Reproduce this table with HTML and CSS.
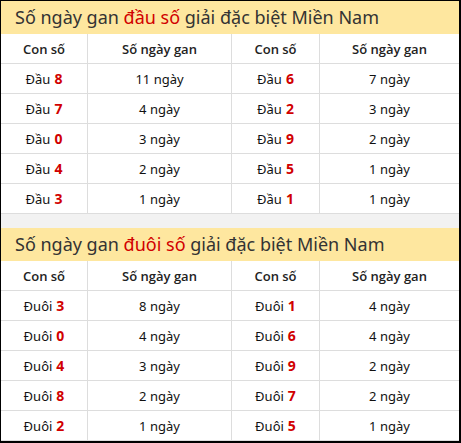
FILE: index.html
```html
<!DOCTYPE html>
<html lang="vi">
<head>
<meta charset="utf-8">
<link rel="stylesheet" href="styles.css">
</head>
<body>
<div class="wrap">
  <section class="block">
    <div class="title">Số ngày gan <span class="hl">đầu số</span> giải đặc biệt Miền Nam</div>
    <div class="grid">
      <div class="cell head">Con số</div><div class="cell head">Số ngày gan</div><div class="cell head">Con số</div><div class="cell head last">Số ngày gan</div>
      <div class="cell">Đầu <b>8</b></div><div class="cell">11 ngày</div><div class="cell">Đầu <b>6</b></div><div class="cell last">7 ngày</div>
      <div class="cell">Đầu <b>7</b></div><div class="cell">4 ngày</div><div class="cell">Đầu <b>2</b></div><div class="cell last">3 ngày</div>
      <div class="cell">Đầu <b>0</b></div><div class="cell">3 ngày</div><div class="cell">Đầu <b>9</b></div><div class="cell last">2 ngày</div>
      <div class="cell">Đầu <b>4</b></div><div class="cell">2 ngày</div><div class="cell">Đầu <b>5</b></div><div class="cell last">1 ngày</div>
      <div class="cell">Đầu <b>3</b></div><div class="cell">1 ngày</div><div class="cell">Đầu <b>1</b></div><div class="cell last">1 ngày</div>
    </div>
  </section>
  <div class="gap"></div>
  <section class="block">
    <div class="title">Số ngày gan <span class="hl">đuôi số</span> giải đặc biệt Miền Nam</div>
    <div class="grid">
      <div class="cell head">Con số</div><div class="cell head">Số ngày gan</div><div class="cell head">Con số</div><div class="cell head last">Số ngày gan</div>
      <div class="cell">Đuôi <b>3</b></div><div class="cell">8 ngày</div><div class="cell">Đuôi <b>1</b></div><div class="cell last">4 ngày</div>
      <div class="cell">Đuôi <b>0</b></div><div class="cell">4 ngày</div><div class="cell">Đuôi <b>6</b></div><div class="cell last">4 ngày</div>
      <div class="cell">Đuôi <b>4</b></div><div class="cell">3 ngày</div><div class="cell">Đuôi <b>9</b></div><div class="cell last">2 ngày</div>
      <div class="cell">Đuôi <b>8</b></div><div class="cell">2 ngày</div><div class="cell">Đuôi <b>7</b></div><div class="cell last">2 ngày</div>
      <div class="cell">Đuôi <b>2</b></div><div class="cell">1 ngày</div><div class="cell">Đuôi <b>5</b></div><div class="cell last">1 ngày</div>
    </div>
  </section>
</div>
</body>
</html>
```
FILE: styles.css
```css
html, body {
  margin: 0;
  padding: 0;
  background: #fff;
}
.wrap {
  box-sizing: border-box;
  width: 461px;
  height: 443px;
  border-left: 1px solid #000;
  border-top: 1px solid #000;
  border-right: 2px solid #000;
  border-bottom: 2px solid #000;
  font-family: "Noto Sans", "Open Sans", sans-serif;
  color: #111;
  overflow: hidden;
}
.title {
  height: 33px;
  line-height: 33px;
  background: #fee79f;
  padding-left: 14px;
  font-size: 18px;
  color: #333;
  white-space: nowrap;
}
.hl {
  color: #d10000;
}
.grid {
  display: grid;
  grid-template-columns: 87px 144px 88px 1fr;
}
.cell {
  box-sizing: border-box;
  height: 30px;
  border-bottom: 1px solid #ddd;
  border-right: 1px solid #ddd;
  display: flex;
  align-items: center;
  justify-content: center;
  font-size: 13px;
  color: #111;
}
.cell.last {
  border-right: none;
}
.cell.head {
  font-family: "Open Sans", "Noto Sans", sans-serif;
  font-weight: 600;
  font-size: 13px;
  color: #222;
}
.cell b {
  color: #d10000;
  font-weight: 700;
  margin-left: 4px;
  font-size: 14px;
}
.gap {
  height: 14px;
  background: #f2f2f2;
}
```
